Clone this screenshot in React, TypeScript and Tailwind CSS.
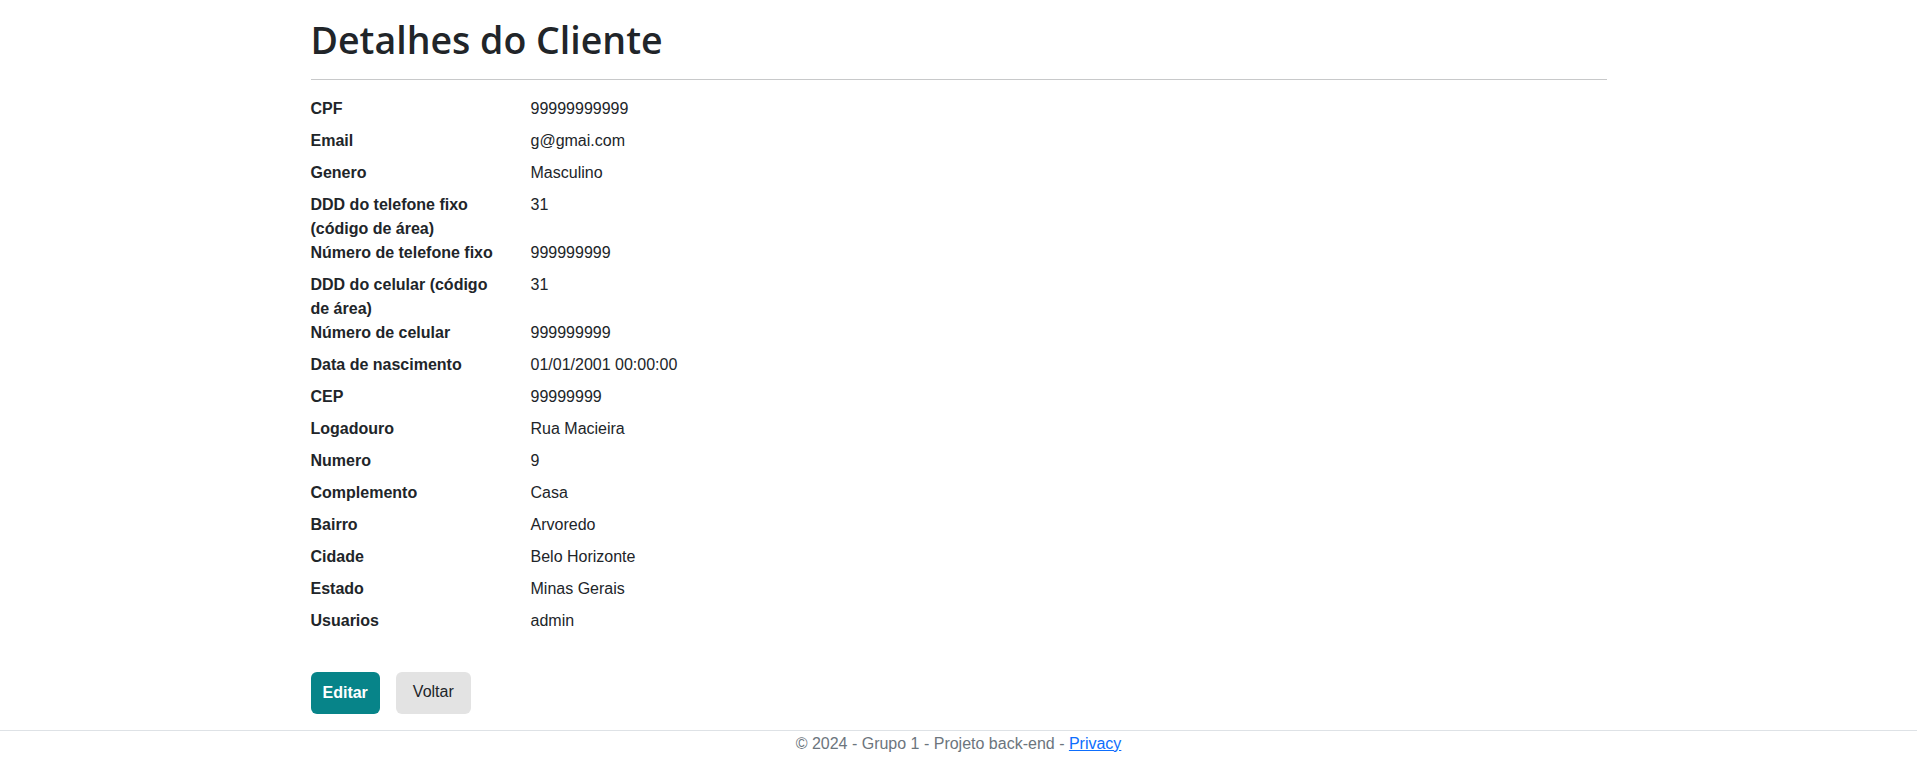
import React from "react";

const rows: [string, string][] = [
  ["CPF", "99999999999"],
  ["Email", "g@gmai.com"],
  ["Genero", "Masculino"],
  ["DDD do telefone fixo (código de área)", "31"],
  ["Número de telefone fixo", "999999999"],
  ["DDD do celular (código de área)", "31"],
  ["Número de celular", "999999999"],
  ["Data de nascimento", "01/01/2001 00:00:00"],
  ["CEP", "99999999"],
  ["Logadouro", "Rua Macieira"],
  ["Numero", "9"],
  ["Complemento", "Casa"],
  ["Bairro", "Arvoredo"],
  ["Cidade", "Belo Horizonte"],
  ["Estado", "Minas Gerais"],
  ["Usuarios", "admin"],
];

export default function App() {
  return (
    <div className="min-h-[781px] bg-white text-[#212529] font-['Liberation_Sans',Arial,sans-serif] text-base leading-6">
      <div className="mx-auto max-w-[1320px] px-3 pt-4">
        <h1 className="font-['Open_Sans',sans-serif] text-[37.5px] font-semibold leading-[48px] mb-[15px] text-[#212529]">
          Detalhes do Cliente
        </h1>
        <hr className="border-0 border-t border-[#c8c9ca] m-0" />
        <dl className="mt-[17px] mb-0">
          {rows.map(([k, v]) => (
            <div key={k} className="flex">
              <dt className="w-[196px] shrink-0 font-bold">{k}</dt>
              <dd className="ml-6 mb-2">{v}</dd>
            </div>
          ))}
        </dl>
        <div className="mt-[31px] flex gap-4">
          <button className="h-[42px] px-3 rounded-md bg-[#078489] text-white font-bold flex items-center">
            Editar
          </button>
          <button className="h-[42px] px-[17px] pb-[3px] rounded-md bg-[#e3e3e3] text-[#212529] flex items-center">
            Voltar
          </button>
        </div>
      </div>
      <footer className="mt-4 border-t border-[#dee2e6] text-[#6c757d]">
        <div className="mx-auto max-w-[1320px] px-3 pt-px text-center leading-6">
          © 2024 - Grupo 1 - Projeto back-end -{" "}
          <a href="#" className="text-[#0d6efd] underline">
            Privacy
          </a>
        </div>
      </footer>
    </div>
  );
}
